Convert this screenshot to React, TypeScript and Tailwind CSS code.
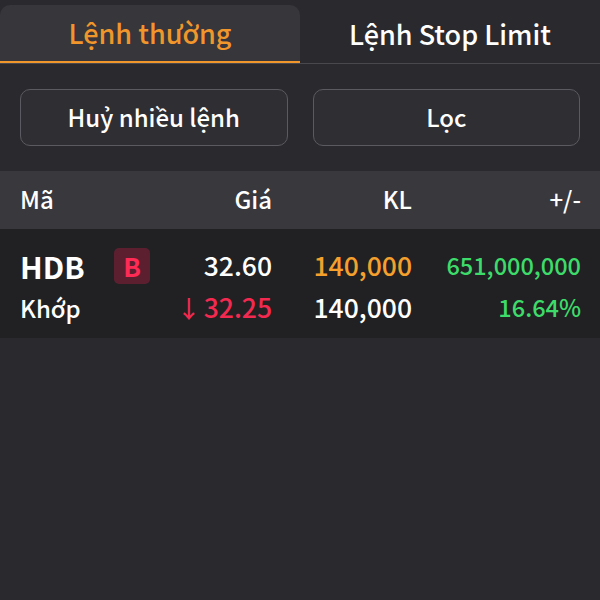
export default function App() {
  return (
    <div
      className="w-[600px] h-[600px] bg-[#2a2a2e] text-white overflow-hidden"
      style={{ fontFamily: '"Noto Sans CJK SC", "Noto Sans", sans-serif' }}
    >
      {/* tabs */}
      <div className="pt-[5px] flex border-b border-[#48484d]">
        <div className="w-[300px] h-[58px] pb-[1px] bg-[#36363b] rounded-t-[10px] border-b-2 border-[#f0962a] flex items-center justify-center text-[27px] font-medium leading-none text-[#f0962a]">
          Lệnh thường
        </div>
        <div className="flex-1 h-[58px] pb-[1px] flex items-center justify-center text-[27px] font-medium leading-none text-white">
          Lệnh Stop Limit
        </div>
      </div>

      {/* actions */}
      <div className="flex gap-[25px] px-[20px] pt-[25px] pb-[25px]">
        <button className="flex-1 h-[57px] pb-[2px] rounded-[10px] border border-[#5a5a60] bg-[#2e2e33] text-[24px] font-medium leading-none text-white">
          Huỷ nhiều lệnh
        </button>
        <button className="flex-1 h-[57px] pb-[2px] rounded-[10px] border border-[#5a5a60] bg-[#2e2e33] text-[24px] font-medium leading-none text-white">
          Lọc
        </button>
      </div>

      {/* table header */}
      <div className="h-[58px] pb-[2px] bg-[#38383d] grid grid-cols-[130px_122px_140px_169px] items-center px-[20px] pr-[19px] text-[24px] font-medium leading-none">
        <div>Mã</div>
        <div className="text-right">Giá</div>
        <div className="text-right">KL</div>
        <div className="text-right">+/-</div>
      </div>

      {/* row */}
      <div className="bg-[#212124] h-[109px] pt-[6px] px-[20px] pr-[19px] grid grid-cols-[130px_122px_140px_169px] grid-rows-[38px_38px] content-center gap-y-[4px] text-[26.5px] font-medium leading-none">
        <div className="flex items-center">
          <span className="font-bold text-[30px] w-[94px]">HDB</span>
          <span className="w-[36px] h-[36px] rounded-[5px] bg-[#5c1f30] text-[#ff2b55] font-bold text-[26px] flex items-center justify-center">
            B
          </span>
        </div>
        <div className="text-right self-center">32.60</div>
        <div className="text-right self-center text-[#f5a02d]">140,000</div>
        <div className="text-right self-center text-[23.5px] text-[#3ddc6a]">651,000,000</div>

        <div className="self-center text-[24px]">Khớp</div>
        <div className="text-right self-center text-[#f4294f]">
          <span className="text-[24px] mr-[3px]">↓</span>32.25
        </div>
        <div className="text-right self-center">140,000</div>
        <div className="text-right self-center text-[23.5px] text-[#3ddc6a]">16.64%</div>
      </div>
    </div>
  );
}
